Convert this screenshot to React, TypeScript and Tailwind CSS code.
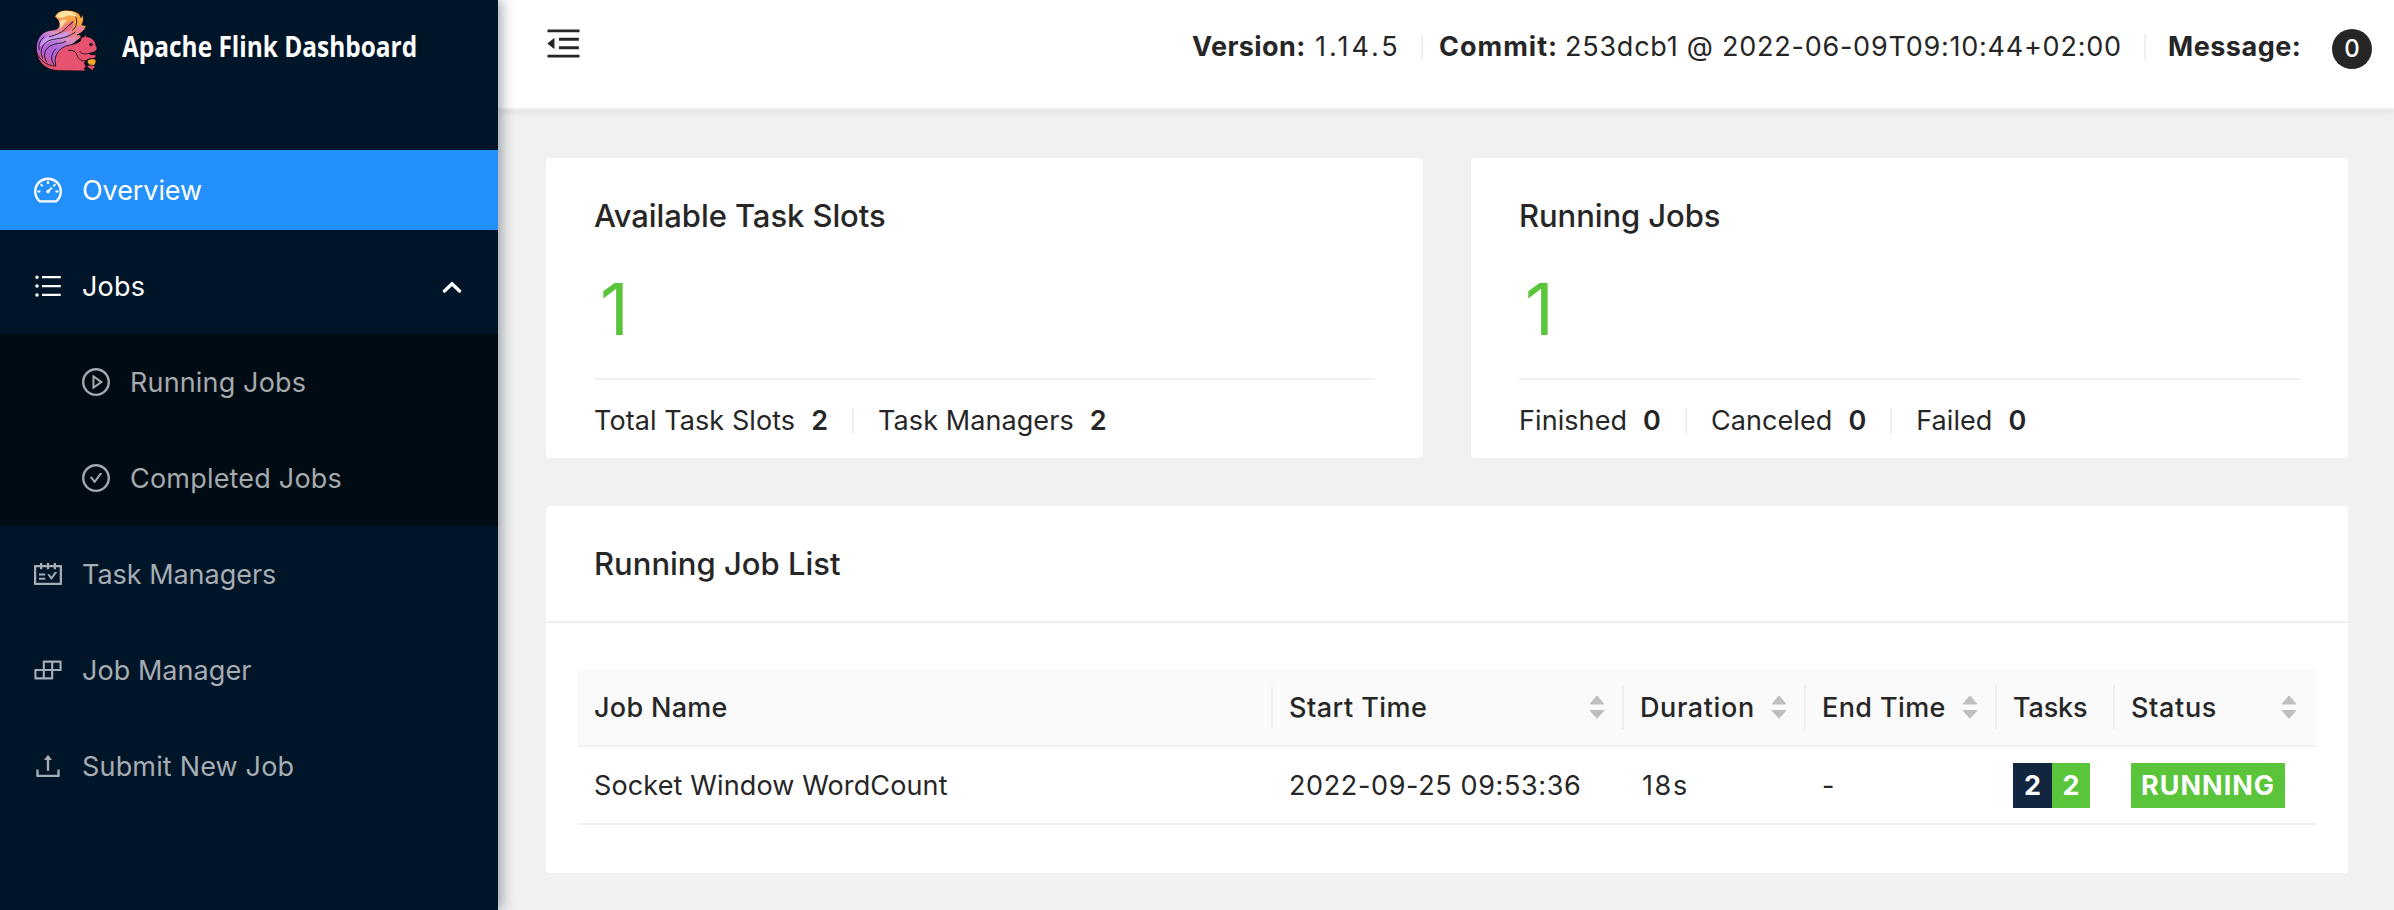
import type { ReactNode } from 'react';
import {
  AiOutlineBars,
  AiOutlineBuild,
  AiOutlineCheckCircle,
  AiOutlineDashboard,
  AiOutlineMenuFold,
  AiOutlinePlayCircle,
  AiOutlineSchedule,
  AiOutlineUpload,
} from 'react-icons/ai';

function Squirrel() {
  return (
    <svg viewBox="30 28 188 190" className="h-[63px] w-[63px] shrink-0">
      <defs>
        <linearGradient id="tail" x1="150" y1="30" x2="60" y2="200" gradientUnits="userSpaceOnUse">
          <stop offset="0" stopColor="#fbb041" />
          <stop offset="0.2" stopColor="#f8a04a" />
          <stop offset="0.34" stopColor="#ee7d86" />
          <stop offset="0.48" stopColor="#d98fc4" />
          <stop offset="0.62" stopColor="#b06ee0" />
          <stop offset="0.82" stopColor="#b45fd0" />
          <stop offset="1" stopColor="#e65270" />
        </linearGradient>
      </defs>
      <g stroke="#0b0b12" strokeWidth="2.5" strokeLinejoin="round" strokeLinecap="round">
        <path
          d="M98 214C62 208 36 184 33 152C31 122 46 98 72 93C86 90 98 92 101 80C104 67 98 58 88 52C94 36 112 29 132 32C150 33 164 40 168 54L172 44C178 58 175 66 170 76L183 78C182 90 170 100 156 106C170 104 172 112 160 120L110 160Z"
          fill="url(#tail)"
        />
        <path d="M93 50C98 36 116 32 134 35C146 37 154 44 156 54C144 46 128 46 116 53C108 56 98 56 93 50Z" fill="#fde3a0" stroke="none" />
        <path d="M102 66C108 58 118 58 126 62C118 70 114 80 104 88C106 80 106 72 102 66Z" fill="#fbd9a0" stroke="none" />
        <path d="M112 92C124 84 128 70 142 62C150 74 142 88 128 96C122 98 116 96 112 92Z" fill="#ea6a84" stroke="none" />
        <path d="M150 84C154 78 164 78 178 82C176 94 164 101 148 108C156 100 156 92 150 84Z" fill="#ee7d96" stroke="none" />
        <path d="M44 140C50 118 66 108 92 106C112 104 124 98 136 92C128 110 110 118 92 122C72 126 56 134 44 140Z" fill="#c99af0" stroke="none" />
        <path
          d="M102 214C62 214 38 190 33 158C44 184 66 200 92 200C84 174 98 148 122 140C140 134 156 134 166 124C167 115 171 110 176 113L181 105L185 112C201 113 212 124 213 139C219 146 216 154 207 158L192 162C196 166 204 166 212 166C216 171 210 178 200 178C188 178 180 184 178 192C184 200 184 206 176 208C184 210 182 215 174 215Z"
          fill="#e65270"
        />
        <path d="M130 153C144 150 154 158 156 168C160 182 172 186 184 184" fill="none" />
        <path d="M164 156C168 164 180 165 192 162" fill="none" />
        <path d="M52 176C42 156 50 136 66 126C86 114 120 122 150 98" fill="none" />
        <path d="M64 188C52 168 58 150 74 140C90 130 108 134 122 126" fill="none" />
        <path d="M86 196C74 178 78 162 92 148" fill="none" />
        <path d="M42 150C38 136 44 122 56 112" fill="none" />
        <path d="M72 112C92 106 112 100 124 84C132 74 140 74 144 66" fill="none" />
        <path d="M142 92C154 84 158 68 152 52" fill="none" />
        <path d="M186 184C192 177 206 176 213 181C214 192 210 198 201 200C192 199 187 193 186 184Z" fill="#f7a833" />
        <path d="M184 199C192 196 206 197 211 201C210 206 204 208 202 214C196 208 188 206 184 199Z" fill="#e65270" />
      </g>
      <circle cx="198" cy="135" r="5" fill="#0b0b12" />
      <circle cx="199.500" cy="133.500" r="1.400" fill="#fff" />
    </svg>
  );
}

function MenuItem({
  icon,
  label,
  className = 'pl-8 text-[#a6adb4] tracking-[0.05px]',
  children,
}: {
  icon: ReactNode;
  label: string;
  className?: string;
  children?: ReactNode;
}) {
  return (
    <div className={`flex h-20 items-center gap-[18px] text-[27px] ${className}`}>
      <span className="text-[32px]">{icon}</span>
      <span className="pt-0.5">{label}</span>
      {children}
    </div>
  );
}

function Sidebar() {
  return (
    <aside className="z-20 flex w-[498px] shrink-0 flex-col bg-[#001528] shadow-[4px_0_12px_rgba(0,21,41,0.35)]">
      <div className="flex h-[150px] items-start pl-[35px] pt-[9px]">
        <Squirrel />
        <span className="ml-6 mt-4 w-[340px] origin-left scale-x-[0.872] whitespace-nowrap font-['Open_Sans',sans-serif] text-[28px] font-bold leading-[42px] text-white">
          Apache Flink Dashboard
        </span>
      </div>
      <nav className="flex flex-col">
        <MenuItem
          icon={<AiOutlineDashboard />}
          label="Overview"
          className="bg-[#2490fb] pl-8 tracking-[-0.08px] text-white"
        />
        <MenuItem icon={<AiOutlineBars />} label="Jobs" className="mt-4 pl-8 tracking-[0.2px] text-white">
          <svg viewBox="0 0 20 12" className="ml-auto mr-9 mt-0.5 h-3 w-5">
            <path d="M2.500 10 L10 2.800 L17.500 10" fill="none" stroke="currentColor" strokeWidth="3.400" strokeLinecap="round" />
          </svg>
        </MenuItem>
        <div className="mt-2 flex flex-col gap-4 bg-[#000b14] py-2">
          <MenuItem
            icon={<AiOutlinePlayCircle />}
            label="Running Jobs"
            className="pl-20 tracking-[0.15px] text-[#a6a9ad]"
          />
          <MenuItem
            icon={<AiOutlineCheckCircle />}
            label="Completed Jobs"
            className="pl-20 tracking-[0.2px] text-[#a6a9ad]"
          />
        </div>
        <div className="mt-2 flex flex-col gap-4">
          <MenuItem
            icon={<AiOutlineSchedule />}
            label="Task Managers"
            className="pl-8 tracking-[-0.03px] text-[#a6adb4]"
          />
          <MenuItem icon={<AiOutlineBuild />} label="Job Manager" />
          <MenuItem
            icon={<AiOutlineUpload />}
            label="Submit New Job"
            className="pl-8 tracking-[0.17px] text-[#a6adb4]"
          />
        </div>
      </nav>
    </aside>
  );
}

function Header() {
  return (
    <header className="z-10 flex h-[110px] shrink-0 items-start border-b-2 border-[#f0f0f0] bg-white shadow-[0_2px_8px_rgba(0,21,41,0.08)]">
      <AiOutlineMenuFold className="ml-[45px] mt-[23px] text-[41px]" />
      <div className="ml-auto flex h-[94px] items-center whitespace-nowrap">
        <span className="w-[121px] font-bold tracking-[0.4px]">Version:</span>
        <span className="w-[108px] pl-0.5 tracking-[3px]">1.14.5</span>
        <span className="h-[26px] w-0.5 bg-[#f0f0f0]" />
        <span className="ml-4 w-[126px] font-bold tracking-[1px]">Commit:</span>
        <span className="w-[579px] tracking-[0.76px]">253dcb1 @ 2022-06-09T09:10:44+02:00</span>
        <span className="h-[26px] w-0.5 bg-[#f0f0f0]" />
        <span className="ml-[22px] w-[164px] font-bold tracking-[0.5px]">Message:</span>
        <span className="mr-[22px] mt-1 flex size-10 items-center justify-center rounded-full bg-[#262626] text-2xl font-medium text-white">
          0
        </span>
      </div>
    </header>
  );
}

function StatCard({ title, value, stats }: { title: string; value: number; stats: [string, number][] }) {
  return (
    <section className="flex h-[300px] flex-1 flex-col rounded bg-white px-12">
      <h2 className="mt-9 text-[31px] font-medium leading-[44px] tracking-[-0.08px]">{title}</h2>
      <div className="mb-[19px] mt-[21px] pl-1.5 text-[71px] leading-[100px] text-[#5ac43b]">{value}</div>
      <div className="flex flex-1 items-center border-t-2 border-[#f0f0f0] pt-1">
        {stats.map(([label, count], i) => (
          <div key={label} className="flex items-center">
            {i > 0 && <span className="mx-6 h-[26px] w-0.5 bg-[#f0f0f0]" />}
            <span className="tracking-[0.08px]">{label}</span>
            <span className="ml-4 font-semibold">{count}</span>
          </div>
        ))}
      </div>
    </section>
  );
}

function Sorter() {
  return (
    <svg viewBox="0 0 16 24" className="mr-[17px] h-6 w-4 text-[#bfbfbf]">
      <path
        d="M8 1 L15 9 H1 Z M1 15.500 H15 L8 23.200 Z"
        fill="currentColor"
        stroke="currentColor"
        strokeWidth="1"
        strokeLinejoin="round"
      />
    </svg>
  );
}

const columns: { label: string; sortable: boolean; tracking: string }[] = [
  { label: 'Job Name', sortable: false, tracking: 'tracking-[0.3px]' },
  { label: 'Start Time', sortable: true, tracking: 'tracking-[0.47px]' },
  { label: 'Duration', sortable: true, tracking: 'tracking-[0.6px]' },
  { label: 'End Time', sortable: true, tracking: 'tracking-[0.4px]' },
  { label: 'Tasks', sortable: false, tracking: 'tracking-[-0.15px]' },
  { label: 'Status', sortable: true, tracking: 'tracking-[0.65px]' },
];

function JobTable() {
  return (
    <div className="mx-8 mt-[46px] grid grid-cols-[695px_351px_182px_191px_118px_201px] whitespace-nowrap">
      {columns.map(({ label, sortable, tracking }, i) => (
        <div key={label} className="flex h-[78px] items-center border-b-2 border-[#f0f0f0] bg-[#fafafa] pl-4">
          <span className={`mr-auto pt-0.5 font-medium ${tracking}`}>{label}</span>
          {sortable && <Sorter />}
          <span className={`h-11 w-0.5 ${i < columns.length - 1 ? 'bg-[#eeeeee]' : ''}`} />
        </div>
      ))}
      <div className="col-span-6 grid h-[78px] grid-cols-subgrid items-center border-b-2 border-[#f0f0f0]">
        <span className="pl-4 pt-0.5 tracking-[0.13px]">Socket Window WordCount</span>
        <span className="pl-4 pt-0.5 tracking-[0.63px]">2022-09-25 09:53:36</span>
        <span className="pl-[18px] pt-0.5 tracking-[1.6px]">18s</span>
        <span className="pl-4 pt-0.5">-</span>
        <div className="flex pl-4 font-bold leading-[45px] text-white">
          <span className="w-[39px] bg-[#12263f] text-center">2</span>
          <span className="w-[38px] bg-[#5ac43b] text-center">2</span>
        </div>
        <div className="pl-4">
          <span className="block w-[154px] bg-[#5ac43b] pl-2.5 font-bold leading-[45px] tracking-[1px] text-white">
            RUNNING
          </span>
        </div>
      </div>
    </div>
  );
}

export default function App() {
  return (
    <div className="flex h-[910px] w-[2394px] overflow-hidden bg-[#f1f1f1] font-['Inter','Liberation_Sans',sans-serif] text-[27px] leading-10 text-[#262626]">
      <Sidebar />
      <div className="flex flex-1 flex-col">
        <Header />
        <main className="flex flex-col gap-12 pl-12 pr-[46px] pt-12">
          <div className="flex gap-12">
            <StatCard
              title="Available Task Slots"
              value={1}
              stats={[
                ['Total Task Slots', 2],
                ['Task Managers', 2],
              ]}
            />
            <StatCard
              title="Running Jobs"
              value={1}
              stats={[
                ['Finished', 0],
                ['Canceled', 0],
                ['Failed', 0],
              ]}
            />
          </div>
          <section className="flex h-[367px] flex-col rounded bg-white">
            <h2 className="flex h-[117px] items-center border-b-2 border-[#f0f0f0] px-12 text-[31px] font-medium">
              Running Job List
            </h2>
            <JobTable />
          </section>
        </main>
      </div>
    </div>
  );
}
